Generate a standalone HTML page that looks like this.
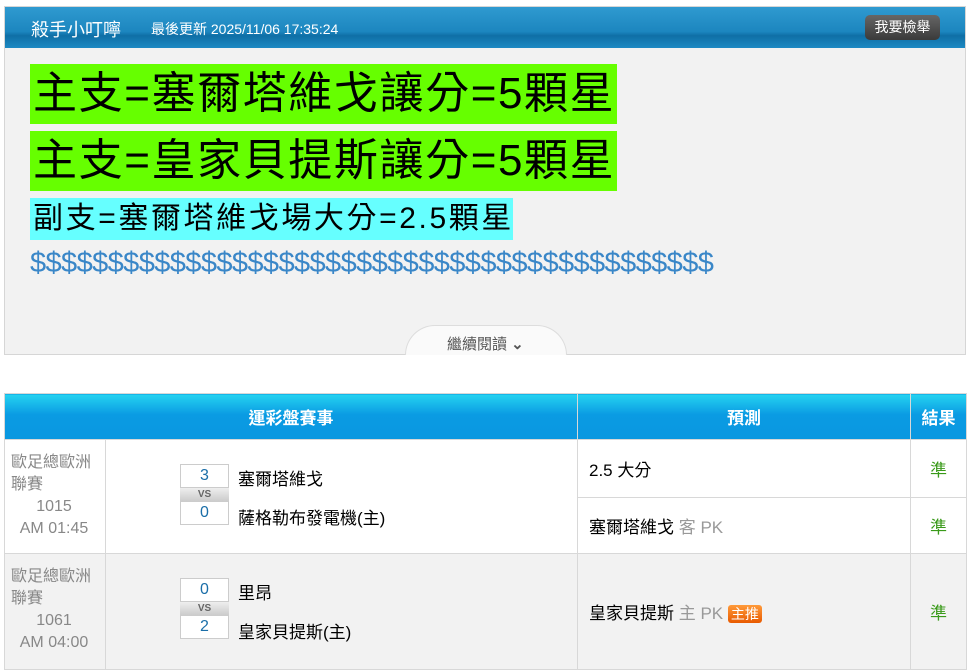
<!DOCTYPE html>
<html><head><meta charset="utf-8"><style>
*{margin:0;padding:0;box-sizing:border-box}
body{width:973px;height:668px;overflow:hidden;background:#fff;font-family:"Liberation Sans","Noto Sans CJK TC",sans-serif;position:relative}
.abs{position:absolute}
.box{left:4px;top:6px;width:962px;height:349px;border:1px solid #d6d6d6;background:#f2f2f2}
.hdr{left:5px;top:7px;width:960px;height:41px;background:linear-gradient(#2f9ad0,#1c86bf 60%,#0f6fa6 70%,#1d89c3);color:#fff}
.big{font-size:44px;line-height:60px;background:#66ff00;color:#000;padding:0 3px;white-space:nowrap;letter-spacing:1.6px}
td,th{border:1px solid #d8d8d8}
table{border-collapse:collapse;table-layout:fixed;position:absolute;left:4px;top:393px;width:962px;font-size:17px}
th{background:linear-gradient(#25d3f0,#0a9be3 45%,#0a97e0);color:#fff;font-weight:bold;height:46px;font-size:17px}
.lg{color:#888;font-size:16px;line-height:22px;padding-left:6px;vertical-align:top;padding-top:12px}
.sc{width:49px;height:24px;border:1px solid #ccc;background:#fff;color:#1a6ea8;text-align:center;line-height:22px;font-size:16px}
.vs{width:49px;height:13px;background:linear-gradient(#eee,#ccc);color:#666;font-size:10px;font-weight:bold;text-align:center;line-height:13px}
.ok{color:#3a9a1a;text-align:center}
.g{color:#999}
</style></head><body>
<div class="abs box"></div>
<div class="abs hdr">
<span class="abs" style="left:26px;top:9px;font-size:18px">殺手小叮嚀</span>
<span class="abs" style="left:146px;top:12px;font-size:14px">最後更新 2025/11/06 17:35:24</span>
<span class="abs" style="left:860px;top:8px;width:75px;height:25px;border-radius:5px;background:linear-gradient(#666,#3a3a3a);font-size:14px;text-align:center;line-height:25px">我要檢舉</span>
</div>
<div class="abs big" style="left:30px;top:64px;width:587px">主支=塞爾塔維戈讓分=5顆星</div>
<div class="abs big" style="left:30px;top:131px;width:587px">主支=皇家貝提斯讓分=5顆星</div>
<div class="abs big" style="left:30px;top:198px;font-size:30px;line-height:42px;background:#66ffff;width:483px;letter-spacing:2.6px">副支=塞爾塔維戈場大分=2.5顆星</div>
<div class="abs" style="left:30px;top:247px;font-size:29px;color:#3a87c8;letter-spacing:-0.6px">$$$$$$$$$$$$$$$$$$$$$$$$$$$$$$$$$$$$$$$$$$$$</div>
<div class="abs" style="left:405px;top:325px;width:162px;height:30px;background:#fafafa;border-radius:40px 40px 0 0;border:1px solid #ddd;border-bottom:none"></div>
<div class="abs" style="left:447px;top:333px;font-size:15px;color:#555">繼續閱讀 <b>⌄</b></div>
<table>
<colgroup><col style="width:101px"><col style="width:472px"><col style="width:333px"><col style="width:56px"></colgroup>
<tr><th colspan="2">運彩盤賽事</th><th>預測</th><th>結果</th></tr>
<tr style="height:58px"><td rowspan="2" class="lg">歐足總歐洲<br>聯賽<div style="text-align:center;padding-right:8px">1015<br>AM 01:45</div></td>
<td rowspan="2" style="position:relative"><div class="abs" style="left:74px;top:24px"><div class="sc">3</div><div class="vs">VS</div><div class="sc">0</div></div><span class="abs" style="left:132px;top:25px">塞爾塔維戈</span><span class="abs" style="left:132px;top:64px">薩格勒布發電機(主)</span></td>
<td style="padding-left:11px">2.5 大分</td><td class="ok">準</td></tr>
<tr style="height:56px"><td style="padding-left:11px">塞爾塔維戈 <span class="g">客 PK</span></td><td class="ok">準</td></tr>
<tr style="height:116px;background:#f2f2f2"><td class="lg">歐足總歐洲<br>聯賽<div style="text-align:center;padding-right:8px">1061<br>AM 04:00</div></td>
<td style="position:relative"><div class="abs" style="left:74px;top:24px"><div class="sc">0</div><div class="vs">VS</div><div class="sc">2</div></div><span class="abs" style="left:132px;top:25px">里昂</span><span class="abs" style="left:132px;top:64px">皇家貝提斯(主)</span></td>
<td style="padding-left:11px">皇家貝提斯 <span class="g">主 PK</span> <span style="background:linear-gradient(#ff9a3a,#e85a00);color:#fff;font-size:14px;padding:1px 3px;border-radius:3px">主推</span></td><td class="ok">準</td></tr>
</table>
</body></html>
